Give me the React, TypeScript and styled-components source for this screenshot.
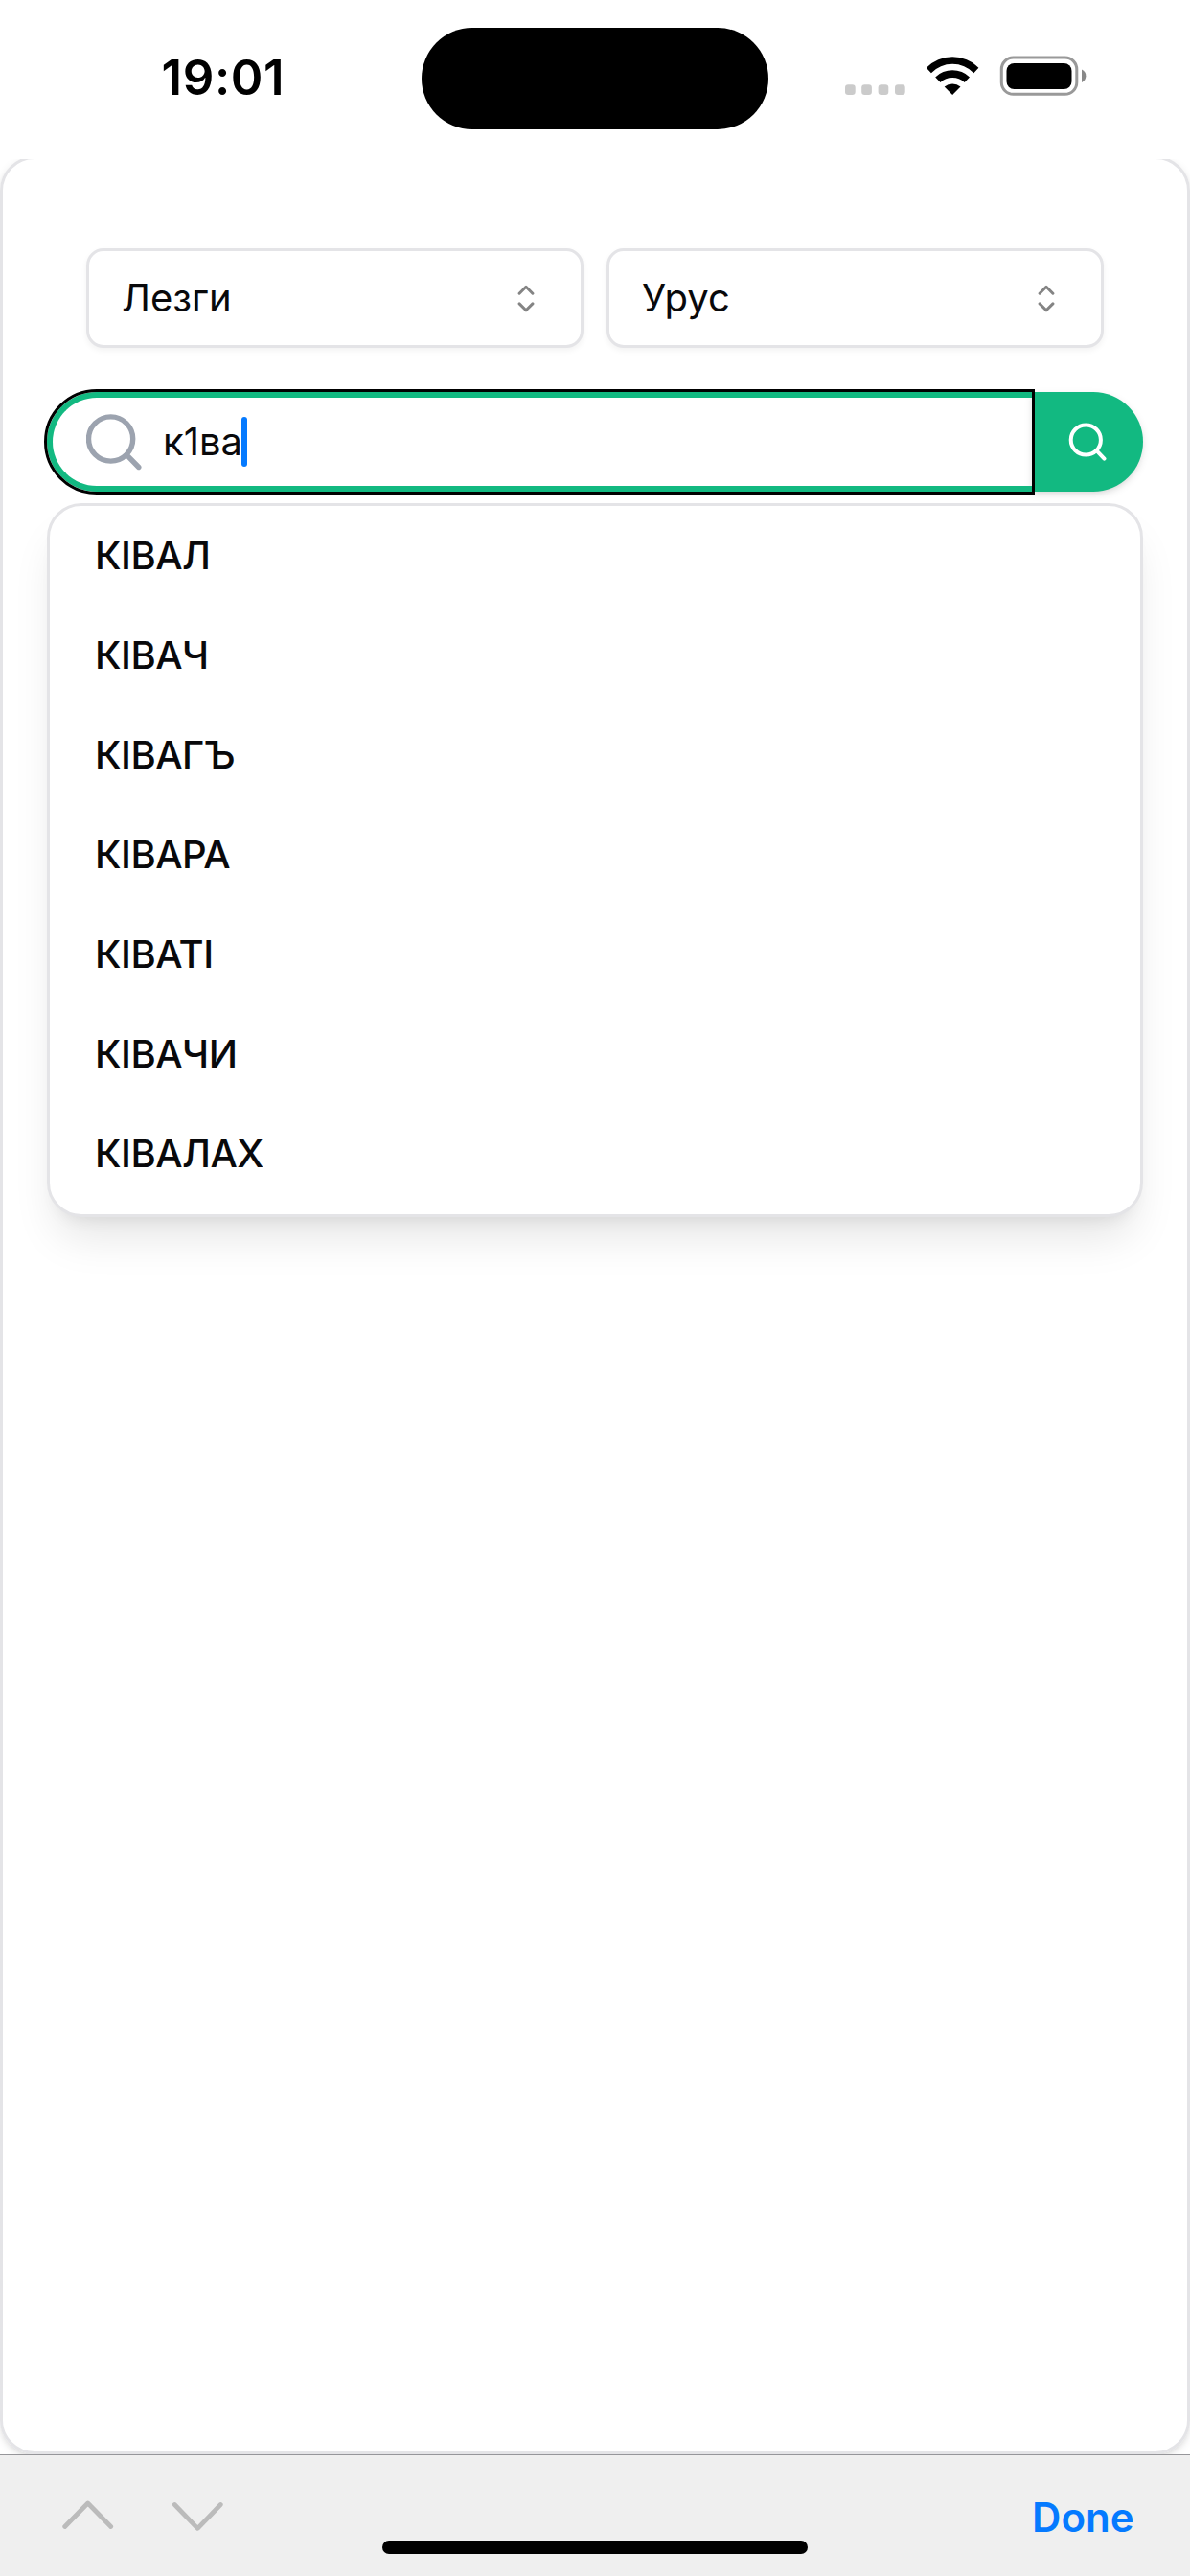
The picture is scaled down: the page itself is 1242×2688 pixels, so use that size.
import React from "react";
import styled, { createGlobalStyle } from "styled-components";

const GlobalStyle = createGlobalStyle`
  *, *::before, *::after { box-sizing: border-box; }
  body {
    margin: 0;
    background: #ffffff;
    color: #09090b;
    font-family: Inter, "Noto Sans", sans-serif;
  }
  svg { display: block; flex: none; }
`;

const Screen = styled.div`
  width: 1242px;
  height: 2688px;
  display: flex;
  flex-direction: column;
  overflow: hidden;
  background: #ffffff;
`;

/* Status bar */

const StatusBar = styled.header`
  height: 166px;
  flex: none;
  display: grid;
  grid-template-columns: 440px 362px 1fr;
  align-items: start;
  background: #ffffff;
`;

const Clock = styled.time`
  padding: 50px 0 0 168.5px;
  font-size: 51px;
  line-height: 62px;
  font-weight: 600;
  letter-spacing: 0.6px;
  color: #000000;
`;

const Island = styled.div`
  height: 106px;
  margin-top: 28.5px;
  border-radius: 53px;
  background: #000000;
`;

const StatusIcons = styled.div`
  display: flex;
  padding: 58px 0 0 80px;
`;

/* Page */

const Page = styled.main`
  height: 2395px;
  flex: none;
  overflow: hidden;
`;

const Card = styled.section`
  height: 2398px;
  margin-top: -3px;
  padding: 93px 46px 0;
  border: 3px solid #e4e4e7;
  border-radius: 36px;
  box-shadow: 0 3px 9px rgba(0, 0, 0, 0.1), 0 3px 6px -3px rgba(0, 0, 0, 0.1);
`;

const LanguageRow = styled.div`
  display: grid;
  grid-template-columns: 1fr 1fr;
  gap: 24px;
  padding: 0 41px;
`;

const Select = styled.button`
  height: 104px;
  display: flex;
  align-items: center;
  justify-content: space-between;
  padding: 0 48px 0 34px;
  border: 3px solid #e4e4e7;
  border-radius: 18px;
  background: #ffffff;
  box-shadow: 0 3px 6px rgba(0, 0, 0, 0.05);
  font: 400 40px/60px Inter, "Noto Sans", sans-serif;
  color: #09090b;
`;

const SearchRow = styled.div`
  display: flex;
  height: 104px;
  margin-top: 46px;
`;

const SearchField = styled.div`
  position: relative;
  z-index: 1;
  flex: 1;
  display: flex;
  align-items: center;
  padding-left: 35px;
  border: 6px solid #12b981;
  border-right: 0;
  border-radius: 52px 0 0 52px;
  outline: 3px solid #000000;
`;

const Query = styled.span`
  margin-left: 20px;
  font-size: 40px;
  line-height: 60px;
`;

const Caret = styled.span`
  width: 6px;
  height: 52px;
  margin-left: -1.5px;
  border-radius: 3px;
  background: #057aff;
`;

const SearchButton = styled.button`
  width: 116px;
  display: flex;
  align-items: center;
  padding: 0 0 0 36px;
  border: 0;
  border-radius: 0 52px 52px 0;
  background: #12b981;
  box-shadow: 0 3px 9px rgba(0, 0, 0, 0.1), 0 3px 6px -3px rgba(0, 0, 0, 0.1);
`;

const Suggestions = styled.ul`
  list-style: none;
  margin: 12px 0 0;
  padding: 0 0 11px;
  border: 3px solid #e4e4e7;
  border-radius: 36px;
  background: #ffffff;
  position: relative;
  box-shadow: 0 30px 45px -9px rgba(0, 0, 0, 0.1), 0 12px 18px -12px rgba(0, 0, 0, 0.1);
`;

const Suggestion = styled.li`
  height: 104px;
  padding: 22px 47px;
  font-size: 40px;
  line-height: 60px;
  font-weight: 500;
  letter-spacing: -0.5px;
`;

/* Keyboard accessory bar */

const AccessoryBar = styled.footer`
  position: relative;
  flex: 1;
  display: flex;
  align-items: flex-start;
  border-top: 1px solid #96969a;
  background: #efefef;
  padding: 45px 58.5px 0 64px;
`;

const Steppers = styled.div`
  display: flex;
  gap: 60px;
  flex: 1;
`;

const Done = styled.button`
  margin-top: -6px;
  padding: 0;
  border: 0;
  background: none;
  color: #057aff;
  font: 600 42px/52px Inter, sans-serif;
`;

const HomeIndicator = styled.div`
  position: absolute;
  left: 399px;
  bottom: 23.5px;
  width: 444px;
  height: 14px;
  border-radius: 7px;
  background: #000000;
`;

const SystemIcons = () => (
  <svg width="256" height="44" viewBox="882 58 256 44">
    {[882, 899.2, 916.6, 934].map((x) => (
      <rect key={x} x={x} y="88.3" width="10.7" height="10.7" rx="3.2" fill="#cbcbcb" />
    ))}
    <path d="M966.8 70.8 A38.3 38.3 0 0 1 1021.4 70.8 L1016.3 76.2 A31 31 0 0 0 971.9 76.2 Z" />
    <path d="M976.2 80.5 A25.5 25.5 0 0 1 1012 80.5 L1006.7 86 A18.3 18.3 0 0 0 981.5 86 Z" />
    <path d="M985.7 90.5 A13.2 13.2 0 0 1 1002.5 90.5 L994.1 99 Z" />
    <rect x="1045.3" y="60" width="78.5" height="38.3" rx="12.3" fill="none" stroke="#999999" strokeWidth="3" />
    <rect x="1050.5" y="66" width="68" height="27" rx="8" />
    <path d="M1129 72.5 A7.4 7.4 0 0 1 1129 86 Z" fill="#888888" />
  </svg>
);

const CaretSort = () => (
  <svg width="18" height="30" viewBox="0 0 18 30" fill="none" stroke="#848484" strokeWidth="3" strokeLinecap="round" strokeLinejoin="round">
    <path d="M2.1 10.2 9 3.3 15.9 10.2" />
    <path d="M2.1 20.9 9 27.8 15.9 20.9" />
  </svg>
);

const FieldGlass = () => (
  <svg width="60" height="60" viewBox="0 0 60 60" fill="none" stroke="#9ca3af" strokeWidth="5.4" strokeLinecap="round">
    <circle cx="25.6" cy="27" r="23.1" />
    <path d="M42.2 43.6 54.8 56.5" />
  </svg>
);

const ButtonGlass = () => (
  <svg width="42" height="42" viewBox="0 0 42 42" fill="none" stroke="#ffffff" strokeWidth="4" strokeLinecap="round">
    <circle cx="20.3" cy="19" r="15.6" />
    <path d="M31.4 30.2 39.5 38.6" />
  </svg>
);

const Stepper = ({ d }: { d: string }) => (
  <svg width="55" height="38" viewBox="0 0 55 38" fill="none" stroke="#bbbbbb" strokeWidth="4.8" strokeLinecap="round" strokeLinejoin="round">
    <path d={d} />
  </svg>
);

const words = ["КӀВАЛ", "КӀВАЧ", "КӀВАГЪ", "КӀВАРА", "КӀВАТӀ", "КӀВАЧИ", "КӀВАЛАХ"];

export default function App() {
  return (
    <>
      <GlobalStyle />
      <Screen>
        <StatusBar>
          <Clock>19:01</Clock>
          <Island />
          <StatusIcons>
            <SystemIcons />
          </StatusIcons>
        </StatusBar>
        <Page>
          <Card>
            <LanguageRow>
              {["Лезги", "Урус"].map((language) => (
                <Select key={language}>
                  {language}
                  <CaretSort />
                </Select>
              ))}
            </LanguageRow>
            <SearchRow>
              <SearchField>
                <FieldGlass />
                <Query>к1ва</Query>
                <Caret />
              </SearchField>
              <SearchButton aria-label="Search">
                <ButtonGlass />
              </SearchButton>
            </SearchRow>
            <Suggestions>
              {words.map((word) => (
                <Suggestion key={word}>{word}</Suggestion>
              ))}
            </Suggestions>
          </Card>
        </Page>
        <AccessoryBar>
          <Steppers>
            <Stepper d="M3.7 29.5 27.7 5 51.7 29.5" />
            <Stepper d="M3.3 6.5 27.3 31.3 51.3 6.5" />
          </Steppers>
          <Done>Done</Done>
          <HomeIndicator />
        </AccessoryBar>
      </Screen>
    </>
  );
}
